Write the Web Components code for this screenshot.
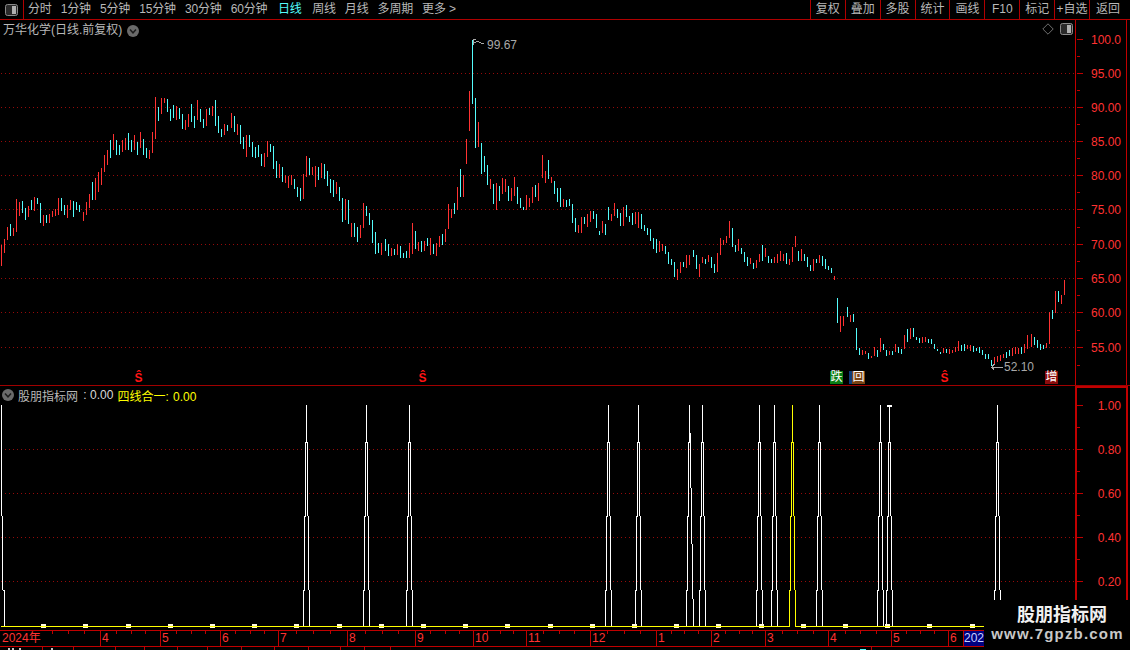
<!DOCTYPE html>
<html>
<head>
<meta charset="utf-8">
<title>万华化学</title>
<style>
html,body{margin:0;height:100%;background:#000;overflow:hidden;}
body{font:12px "Liberation Sans","Noto Sans CJK SC",sans-serif;color:#b8b8b8;}
</style>
</head>
<body>
<app-screen>
  <top-bar slot="top">
    <tool-tab>分时</tool-tab><tool-tab>1分钟</tool-tab><tool-tab>5分钟</tool-tab><tool-tab>15分钟</tool-tab><tool-tab>30分钟</tool-tab><tool-tab>60分钟</tool-tab><tool-tab active>日线</tool-tab><tool-tab>周线</tool-tab><tool-tab>月线</tool-tab><tool-tab>多周期</tool-tab><tool-tab>更多 &gt;</tool-tab>
    <tool-cell slot="right">复权</tool-cell><tool-cell slot="right">叠加</tool-cell><tool-cell slot="right">多股</tool-cell><tool-cell slot="right">统计</tool-cell><tool-cell slot="right">画线</tool-cell><tool-cell slot="right">F10</tool-cell><tool-cell slot="right">标记</tool-cell><tool-cell slot="right">+自选</tool-cell><tool-cell slot="right" last>返回</tool-cell>
  </top-bar>

  <candle-chart slot="main" name="万华化学(日线.前复权)">
    <chart-mark x="133" y="352" kind="sig">Ŝ</chart-mark>
    <chart-mark x="417" y="352" kind="sig">Ŝ</chart-mark>
    <chart-mark x="939" y="352" kind="sig">Ŝ</chart-mark>
    <chart-mark x="830" y="351" kind="die">跌</chart-mark>
    <chart-mark x="852" y="351" kind="back">回</chart-mark>
    <chart-mark x="1045" y="351" kind="add">增</chart-mark>
    <chart-mark x="487" y="18" kind="note">99.67</chart-mark>
    <chart-mark x="1004" y="340" kind="note">52.10</chart-mark>
  </candle-chart>
  <value-axis slot="main" base="20" size="365" labels="39:100.0,73:95.00,107:90.00,141:85.00,175:80.00,209:75.00,244:70.00,278:65.00,312:60.00,347:55.00"></value-axis>

  <indicator-panel slot="sub">
    <round-toggle></round-toggle>
    <span class="name">股朋指标网</span><span class="val"> : 0.00</span>
    <span class="yel">四线合一: 0.00</span>
  </indicator-panel>
  <value-axis slot="sub" base="386" size="244" focus labels="405:1.00,449:0.80,493:0.60,537:0.40,581:0.20"></value-axis>

  <date-axis slot="dates"></date-axis>
  <status-strip slot="dates"></status-strip>

  <brand-mark slot="over"></brand-mark>
</app-screen>

<script>
// small icons shared by a few elements
const ICON_PANEL = (w,h) => `<svg width="${w}" height="${h}" viewBox="0 0 13 12"><rect x=".5" y=".5" width="12" height="11" rx="2" fill="#2a2a2a" stroke="#8a8a8a"/><rect x="7" y="2" width="4" height="8" fill="#b0b0b0"/></svg>`;

class AppScreen extends HTMLElement{
    connectedCallback(){
        this.attachShadow({mode:'open'}).innerHTML = `
        <style>
            :host{display:flex;flex-direction:column;position:relative;width:1130px;height:650px;overflow:hidden;background:#000;}
            .row{display:flex;}
            .main{height:365px;border-bottom:1px solid #a00000;}
            .sub{height:244px;}
        </style>
        <slot name="top"></slot>
        <div class="row main"><slot name="main"></slot></div>
        <div class="row sub"><slot name="sub"></slot></div>
        <slot name="dates"></slot>
        <slot name="over"></slot>`;
    }
}

class TopBar extends HTMLElement{
    connectedCallback(){
        this.attachShadow({mode:'open'}).innerHTML = `
        <style>
            :host{display:flex;height:19px;border-bottom:1px solid #b00000;align-items:stretch;}
            .toggle{width:23px;border-right:1px solid #b00000;display:flex;align-items:center;justify-content:center;}
            .tabs{display:flex;align-items:center;gap:9px;margin-left:4px;flex:1;}
            .right{display:flex;}
        </style>
        <div class="toggle">${ICON_PANEL(13,12)}</div>
        <div class="tabs"><slot></slot></div>
        <div class="right"><slot name="right"></slot></div>`;
    }
}

class ToolTab extends HTMLElement{
    connectedCallback(){
        const on = this.hasAttribute('active');
        this.attachShadow({mode:'open'}).innerHTML = `
        <style>
            :host{display:block;white-space:nowrap;line-height:19px;color:${on ? '#54fcfc' : '#b8b8b8'};letter-spacing:-.15px;}
            :host([active]){margin:0 1.5px;}
        </style><slot></slot>`;
    }
}

class ToolCell extends HTMLElement{
    connectedCallback(){
        this.attachShadow({mode:'open'}).innerHTML = `
        <style>
            :host{display:flex;align-items:center;justify-content:center;box-sizing:border-box;width:34.9px;border-left:1px solid #b00000;line-height:19px;white-space:nowrap;color:#b8b8b8;}
            :host([last]){width:41px;padding-right:4px;}
        </style><slot></slot>`;
    }
}

class RoundToggle extends HTMLElement{
    connectedCallback(){
        this.attachShadow({mode:'open'}).innerHTML = `
        <style>:host{display:inline-flex;width:12px;height:12px;}</style>
        <svg width="12" height="12" viewBox="0 0 12 12"><circle cx="6" cy="6" r="6" fill="#6a6a6a"/><path d="M3 4.6 6 7.8 9 4.6" fill="none" stroke="#1c1c1c" stroke-width="1.5"/></svg>`;
    }
}

// one token per bar: colour, top, bottom. "@x" moves the pen when the spacing drifts
const BARS = `@1 r245,266 r239,253 r227,240 c224,236 r228,236 r199,232 r202,216 c201,213 c208,220 r206,217 c200,210 r197,211 c198,204 c203,223 r215,226 c215,223 r214,223 r211,217 r209,216 r198,215 c198,211 c205,215 r205,218 r200,210 c201,217 c202,210 c205,212
@83 r212,221 r202,215 r194,208 c182,200 r178,200 r172,192 r168,185 r155,172 r150,165 c140,158 r134,150 c140,155 c145,155 r140,152 r138,150 c133,150 c140,152 r135,150 c142,155
@140 r132,148 c139,155 c148,158 r150,159 r132,153 r97,139 c107,121 r98,114 r98,103 c99,112 c109,121 c105,118 r106,120 c108,119 c114,129 r120,130 r114,127 c104,122 c116,128 r100,120 c109,122 c119,128 r109,126 c108,115 r106,116 c100,126 c116,133 c129,137 r124,135 c125,131
@231 r113,128 c116,132 r124,135 c125,144 c137,149 r135,157 c135,147 c142,157 c147,158 c145,157 c154,166 r153,167 r141,157 c144,152 c146,169 c161,178 r164,178
@282 c167,182 r175,183 r176,188 r175,185 c179,189 c187,197 c188,201 r174,199 r156,177 c158,175 r167,175 r166,187 c167,180 r163,178 c164,179 c171,186 c179,193 c180,197 r182,194 c187,201 c198,222 r199,220 c200,224 r223,237 c223,237 c227,242 r225,238 r203,228 c206,216 c213,225 c220,243 c232,254 c243,253 r243,255
@385 c239,251 c244,256 r248,256 c249,255 r244,255 c246,258 c253,258 c251,258 r243,258 r223,254 c231,249 r242,251 c241,252 r241,251 c238,246 r238,255 c244,254 r243,256 r236,247 c234,245 r229,242 r204,229 r209,218 c203,214 r187,210 c169,197 r175,197 r139,164 r91,131 c40,104 c98,148 r122,147 c143,174 c156,172 c165,185 r179,189 c184,204 r183,210 c186,201 r178,194 r179,192 c186,201 r188,201 r177,196 c187,204 c198,208 c207,210 r195,210 r198,207 r187,203 c185,197 r183,201
@542 r155,178 r171,183 c160,179 r177,183 c181,194 c188,202 c188,207 r199,207 c200,207 c199,206 c204,223 c218,232 r225,233 r217,233 c217,224 r214,227 r211,222 c211,219 c214,228 c231,235 r221,233 c224,235 c207,220 r214,221 r203,216 c209,218 c213,226 r207,226 c205,217 c216,222 c213,225 r212,224 r212,228 c214,229 c225,231 c228,235 c229,241 c238,249 c239,253 r241,252 r244,251 c246,254 c252,264 c259,265 c262,277 r269,280 r262,273 c262,267 r255,268 r255,265
@693 c250,257 c255,269 r264,277 r257,263 c259,264 r255,262 c257,268 c264,273 r253,272
@720 r238,255 r240,245 r236,243 r221,238 c228,247 c245,252 r239,251 c248,254 c252,262 c257,266 r258,264 c263,269 r260,268 r254,262 c245,261 r248,257 c256,263 c259,263 r257,263 r254,263 r251,261 r254,261 c253,264 r259,265 r247,262 r236,247 c251,261 r249,261 c254,261 c257,267 c265,271 r259,271 c259,263 r255,263 c256,266 c259,269 c266,270 c268,273 r276,280
@837 c298,323 r316,332 r316,326
@847 c307,317 r315,322 c314,322 c328,350 c348,355 r350,355 r351,354 c353,359 r356,358 r347,356 c350,357 r338,352 c344,350 c350,356 r351,355 c351,355 r344,352 c347,353 c349,354 r335,349 c329,342 r328,339 c328,337 c337,340 c338,343 r337,343 r337,342 c339,343 c339,344 c344,349 c349,351 c352,354 r348,353 c349,353 r349,354 r350,353 r347,352 r341,351 c345,351 c344,351 r345,349 r345,351 c346,352 c348,351 c347,353 c350,355 c354,359 c354,359 c360,366 r357,365 r356,362 r355,361 r354,358 c352,358 c350,356 r348,356 r347,354 r348,354 c347,354 r344,353 r335,349
@1031 r334,347 c337,345 c340,348 c344,350 c345,349 r343,348 r312,344 c310,319 r291,313 c291,302 r295,304 r280,295`;

class CandleChart extends HTMLElement{
    connectedCallback(){
        let x = 1, rects = '';
        BARS.trim().split(/\s+/).forEach(t => {
            if(t[0] == '@'){ x = +t.slice(1); return; }
            const [a,b] = t.slice(1).split(',').map(Number);
            rects += `<rect x="${x}" y="${a}" width="1" height="${b-a}" fill="${t[0]=='r' ? '#ff3232' : '#54fcfc'}"/>`;
            x += 3;
        });
        let grid = '';
        [73,107,141,175,209,244,278,312,347].forEach(y => {
            grid += `<line x1="1" x2="1075" y1="${y+.5}" y2="${y+.5}"/>`;
        });
        this.attachShadow({mode:'open'}).innerHTML = `
        <style>
            :host{display:block;position:relative;width:1075px;height:365px;overflow:hidden;flex:none;}
            svg{display:block;}
            .head{position:absolute;left:3px;top:2px;display:flex;align-items:center;gap:5px;line-height:17px;color:#b8b8b8;}
            .tools{position:absolute;right:2px;top:3px;display:flex;align-items:center;gap:6px;}
        </style>
        <svg width="1075" height="365" viewBox="0 20 1075 365" shape-rendering="crispEdges">
            <g stroke="#960a0a" stroke-dasharray="1 3">${grid}</g>
            ${rects}
            <g fill="none" stroke="#a8a8a8">
                <path d="M473 39.5h3M473.5 39v6M473 42.5h3"/>
                <path d="M476 41.5h3M479 42.5h2M481 43.5h3"/>
                <path d="M991 367.5h12M994.5 364.5h-1v1h-1v1h-1M992 368.5h1v1h1"/>
            </g>
        </svg>
        <div class="head"><span>${this.getAttribute('name')}</span><round-toggle></round-toggle></div>
        <div class="tools">
            <svg width="12" height="12" viewBox="0 0 12 12"><path d="M6 .8 11.2 6 6 11.2 .8 6Z" fill="none" stroke="#6e6e6e"/></svg>
            ${ICON_PANEL(13,12)}
        </div>
        <slot></slot>`;
    }
}

class ChartMark extends HTMLElement{
    connectedCallback(){
        const colors = {
            sig:'color:#ff1414;font-weight:700;font-size:12px;line-height:13px;width:11px;text-align:center;',
            die:'color:#fff;background:#0a7d14;width:13px;height:13px;line-height:13px;text-align:center;',
            back:'color:#fff;background:#7a4314;width:13px;height:13px;line-height:13px;text-align:center;box-shadow:-3px 0 0 #0f3d78;',
            add:'color:#fff;background:#8a0c0c;width:13px;height:13px;line-height:13px;text-align:center;',
            note:'color:#a8a8a8;line-height:14px;'
        };
        this.attachShadow({mode:'open'}).innerHTML = `
        <style>
            :host{position:absolute;display:block;left:${this.getAttribute('x')}px;top:${this.getAttribute('y')}px;white-space:nowrap;${colors[this.getAttribute('kind')]}}
        </style><slot></slot>`;
    }
}

class ValueAxis extends HTMLElement{
    connectedCallback(){
        const base = +this.getAttribute('base'), size = +this.getAttribute('size');
        const focus = this.hasAttribute('focus');
        const marks = this.getAttribute('labels').split(',').map(s => s.split(':'));
        let out = '';
        marks.forEach((m,i) => {
            const y = +m[0] - base;
            out += `<rect x="2" y="${y}" width="6" height="1"/>`;
            const next = marks[i+1] ? +marks[i+1][0] - base : y + (y - (+marks[i-1][0] - base));
            if(next + 2 < size) out += `<rect x="2" y="${Math.round((y+next)/2)}" width="3" height="1"/>`;
            out += `<text x="46" y="${y+5}">${m[1]}</text>`;
        });
        this.attachShadow({mode:'open'}).innerHTML = `
        <style>
            :host{display:block;box-sizing:border-box;width:55px;flex:none;height:${size}px;overflow:hidden;position:relative;}
            svg{display:block;}
            rect,line{fill:#c00000;}
            text{fill:#ff3232;font:12px "Liberation Sans",sans-serif;text-anchor:end;}
        </style>
        <svg width="55" height="${size}" shape-rendering="crispEdges">
            <rect x="0" y="0" width="${focus ? 2 : 1}" height="${size}"/>
            <rect x="51" y="0" width="${focus ? 2 : 1}" height="${size}"/>
            ${focus ? '<rect x="0" y="0" width="53" height="2"/>' : ''}
            ${out}
        </svg>`;
    }
}

class IndicatorPanel extends HTMLElement{
    spike(c, col){
        // four lines that meet at the top, each a little narrower than the last
        return `<path stroke="${col}" fill="none" d="
            M${c+.5} 405V442
            M${c-.5} 442.5H${c+1.5}
            M${c-.5} 442V516 M${c+1.5} 442V516
            M${c-1.5} 516.5H${c-.5} M${c+1.5} 516.5H${c+2.5}
            M${c-1.5} 516V590 M${c+2.5} 516V590
            M${c-2.5} 590.5H${c-1.5} M${c+2.5} 590.5H${c+3.5}
            M${c-2.5} 590V626 M${c+3.5} 590V626"/>`;
    }
    connectedCallback(){
        let out = '';
        [449,493,537,581].forEach(y => {
            out += `<line stroke="#960a0a" stroke-dasharray="1 3" x1="1" x2="1075" y1="${y+.5}" y2="${y+.5}"/>`;
        });
        [306,366,409,608,638,702,759,774,819,880,889,997].forEach(c => out += this.spike(c,'#fff'));
        out += this.spike(792,'#ffff00');
        // the first spike is cut by the left edge, the one at 689 is lopsided
        out += `<path stroke="#fff" fill="none" d="M1.5 405V516M1.5 516.5H2.5M2.5 516V590M2.5 590.5H4.5M4.5 590V626
            M689.5 405V442M688.5 442V516M687.5 516V590M686.5 590V626M688 442.5h2M687 516.5h2M686 590.5h2
            M690.5 433V488M691.5 488V544M692.5 544V599M693.5 599V626"/>`;
        out += `<rect x="887" y="405" width="5" height="2" fill="#fff"/>`;
        for(let i = 1; i <= 23; i++){
            out += `<rect x="${Math.round(i*42.2)-1}" y="624" width="5" height="4" fill="#fffbe0"/>`;
        }
        out += `<path stroke="#ffff00" fill="none" d="M1 626.5H790M795 626.5H984"/>`;
        this.attachShadow({mode:'open'}).innerHTML = `
        <style>
            :host{display:block;width:1075px;height:244px;flex:none;overflow:hidden;}
            .head{display:flex;align-items:center;height:18px;padding-left:2px;white-space:pre;}
            ::slotted(.name){margin-left:4px;color:#b8b8b8;}
            ::slotted(.val){color:#d8d8d8;margin-left:2px;}
            ::slotted(.yel){margin-left:4px;color:#ffff00;word-spacing:1px;}
            svg{display:block;}
        </style>
        <div class="head"><slot></slot></div>
        <svg width="1075" height="226" viewBox="0 404 1075 226" shape-rendering="crispEdges">${out}</svg>`;
    }
}

class DateAxis extends HTMLElement{
    connectedCallback(){
        const cells = [[0,'2024年'],[100,'4'],[160,'5'],[220,'6'],[278,'7'],[347,'8'],[415,'9'],[473,'10'],[526,'11'],[590,'12'],[656,'1'],[711,'2'],[765,'3'],[828,'4'],[891,'5'],[948,'6'],[963,'202']];
        let html = '';
        cells.forEach((c,i) => {
            const w = (cells[i+1] ? cells[i+1][0] : 984) - c[0];
            const blue = c[1] == '202';
            const ticks = blue || w < 20 ? '' : (i == 0 ? [52,68,84] : [25,50,75]).map(p => `<i style="left:${p}%"></i>`).join('');
            html += `<div class="cell${blue ? ' blue' : ''}${i == 0 ? ' first' : ''}" style="width:${w}px">${ticks}<span>${c[1]}</span></div>`;
        });
        this.attachShadow({mode:'open'}).innerHTML = `
        <style>
            :host{display:flex;box-sizing:border-box;width:984px;height:17px;border-top:1px solid #c00000;border-bottom:1px solid #c00000;flex:none;}
            .cell{position:relative;box-sizing:border-box;border-left:1px solid #c00000;padding-left:1px;line-height:15px;color:#ff3232;overflow:hidden;white-space:nowrap;}
            .first{border-left:0;padding-left:2px;}
            .blue{background:#000080;color:#c8d0ff;padding-left:0;}
            i{position:absolute;top:0;width:1px;height:3px;background:#c00000;}
        </style>${html}`;
    }
}

class StatusStrip extends HTMLElement{
    connectedCallback(){
        let out = '';
        [42,73,115,144,177,207,241,274,308,340,364,390,871].forEach(x => out += `<rect x="${x}" y="0" width="1" height="3" fill="#c00000"/>`);
        [8,12,19,51].forEach(x => out += `<rect x="${x}" y="1" width="2" height="2" fill="#c8c8c8"/>`);
        out += `<rect x="860" y="2" width="6" height="1" fill="#54fcfc"/>`;
        this.attachShadow({mode:'open'}).innerHTML = `
        <style>:host{display:block;height:3px;overflow:hidden;} svg{display:block;}</style>
        <svg width="984" height="3" shape-rendering="crispEdges">${out}</svg>`;
    }
}

class BrandMark extends HTMLElement{
    connectedCallback(){
        this.attachShadow({mode:'open'}).innerHTML = `
        <style>
            :host{position:absolute;left:985px;top:600px;width:145px;height:50px;background:#000;display:flex;flex-direction:column;align-items:center;}
            .cn{font:700 18px/24px "Noto Sans CJK SC",sans-serif;color:#f0f0f0;margin-top:1px;margin-left:9px;}
            .en{font:700 15px/16px "Liberation Sans",sans-serif;letter-spacing:1.2px;color:#c8c8c8;margin-top:1px;}
        </style>
        <div class="cn">股朋指标网</div>
        <div class="en">www.7gpzb.com</div>`;
    }
}

customElements.define('app-screen', AppScreen);
customElements.define('top-bar', TopBar);
customElements.define('tool-tab', ToolTab);
customElements.define('tool-cell', ToolCell);
customElements.define('round-toggle', RoundToggle);
customElements.define('candle-chart', CandleChart);
customElements.define('chart-mark', ChartMark);
customElements.define('value-axis', ValueAxis);
customElements.define('indicator-panel', IndicatorPanel);
customElements.define('date-axis', DateAxis);
customElements.define('status-strip', StatusStrip);
customElements.define('brand-mark', BrandMark);
</script>
</body>
</html>
